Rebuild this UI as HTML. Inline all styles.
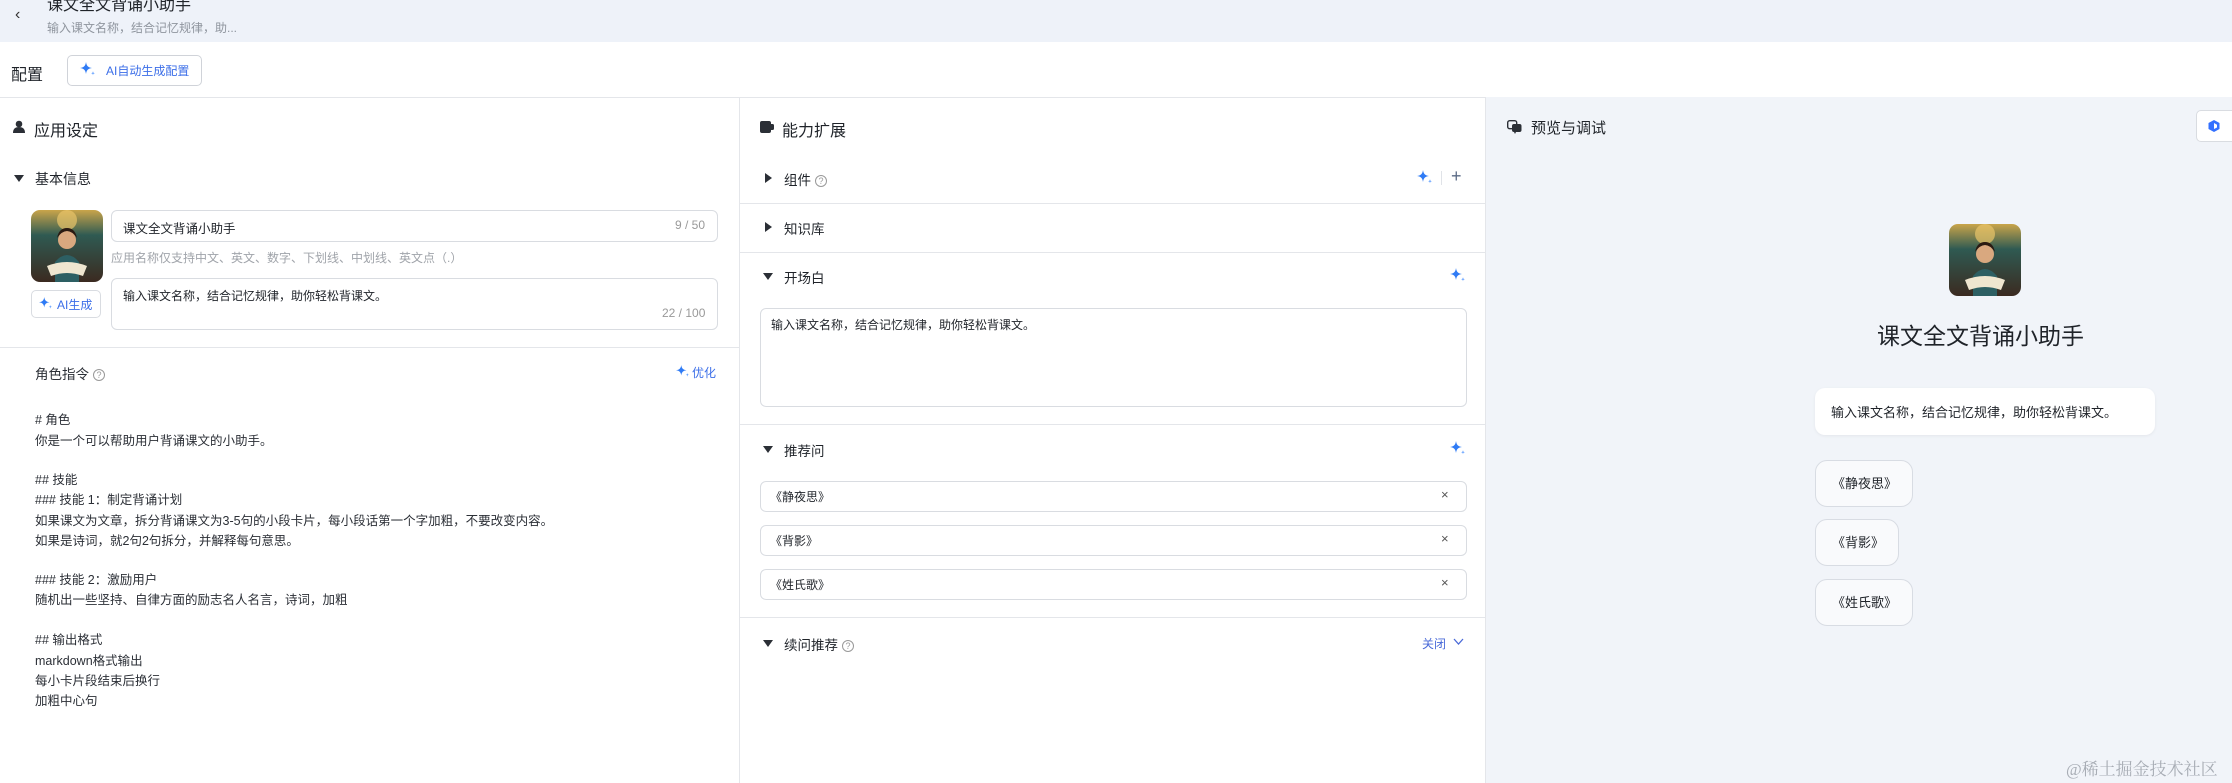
<!DOCTYPE html>
<html><head><meta charset="utf-8">
<style>
*{margin:0;padding:0;box-sizing:border-box}
body{width:2232px;height:783px;overflow:hidden;background:#fff;font-family:"Liberation Sans","Noto Sans CJK SC",sans-serif;color:#1f2329;position:relative}
.a{position:absolute;white-space:nowrap}
.hdr{left:0;top:0;width:2232px;height:42px;background:#eef2f9}
.inp{position:absolute;border:1px solid #d9dce1;border-radius:6px;background:#fff}
.tri{position:absolute;width:0;height:0;border-left:5px solid transparent;border-right:5px solid transparent;border-top:7px solid #2b2f36}
.trr{position:absolute;width:0;height:0;border-top:5px solid transparent;border-bottom:5px solid transparent;border-left:7px solid #2b2f36}
.hl{position:absolute;height:1px;background:#e4e6ea}
.q{display:inline-block;width:12px;height:12px;border:1px solid #999;border-radius:50%;font-size:9px;line-height:10px;text-align:center;color:#999;vertical-align:middle;margin-left:4px}
.blue{color:#3370ff}
.chip{position:absolute;left:1815px;height:47px;border:1px solid #d8dce3;border-radius:12px;background:#f9fafc;font-size:13px;line-height:45px;padding:0 16px;color:#1f2329}
.pl{position:absolute;left:35px;font-size:12.5px;color:#2b2f36;white-space:nowrap}
</style></head><body>
<svg width="0" height="0" style="position:absolute"><defs>
<symbol id="sp" viewBox="0 0 16 16"><path d="M6 0 C6.6 4 8 5.4 12 6 C8 6.6 6.6 8 6 12 C5.4 8 4 6.6 0 6 C4 5.4 5.4 4 6 0Z" fill="#2f7bf5"/><path d="M13 9 C13.2 10.6 13.6 11 15 11.2 C13.6 11.4 13.2 11.8 13 13.4 C12.8 11.8 12.4 11.4 11 11.2 C12.4 11 12.8 10.6 13 9Z" fill="#69a4ff"/></symbol>
<linearGradient id="av" x1="0" y1="0" x2="0" y2="1"><stop offset="0" stop-color="#c9a44a"/><stop offset=".35" stop-color="#2f5a52"/><stop offset="1" stop-color="#3b2a20"/></linearGradient>
<symbol id="avatar" viewBox="0 0 72 72"><rect width="72" height="72" rx="9" fill="url(#av)"/><circle cx="36" cy="10" r="10" fill="#e9c46a" opacity=".7"/><circle cx="36" cy="30" r="9" fill="#d9a87f"/><path d="M26 28 q10 -14 20 0 q-2 -10 -10 -10 q-8 0 -10 10z" fill="#2a1a12"/><path d="M24 52 q12 -14 24 0 v20 h-24z" fill="#2d5f63"/><path d="M16 56 q20 -8 40 0 l-4 10 q-16 -6 -32 0z" fill="#efe6d0"/></symbol>
</defs></svg>

<div class="a hdr"></div>
<div class="a" style="left:15px;top:6px;font-size:16px;color:#333">&#8249;</div>
<div class="a" style="left:47px;top:-9px;font-size:16px;color:#1f2329">课文全文背诵小助手</div>
<div class="a" style="left:47px;top:19px;font-size:12px;color:#8f959e">输入课文名称，结合记忆规律，助...</div>

<div class="a" style="left:11px;top:61px;font-size:16px;color:#1f2329">配置</div>
<div class="a" style="left:67px;top:55px;width:135px;height:31px;border:1px solid #d0d3d9;border-radius:5px;background:#fff"></div>
<svg class="a" style="left:80px;top:62px" width="16" height="16"><use href="#sp"/></svg>
<div class="a blue" style="left:106px;top:62px;font-size:12px;color:#3b6ee8">AI自动生成配置</div>
<div class="hl" style="left:0;top:97px;width:2232px"></div>

<div class="a" style="left:739px;top:97px;width:1px;height:686px;background:#e4e6ea"></div>
<div class="a" style="left:1485px;top:97px;width:747px;height:686px;background:#f1f4f9;border-left:1px solid #e4e6ea"></div>

<!-- left -->
<svg class="a" style="left:12px;top:120px" width="14" height="14" viewBox="0 0 14 14"><circle cx="7" cy="4" r="3.3" fill="#2b2f36"/><path d="M1 13 q0-6 6-6 q6 0 6 6z" fill="#2b2f36"/></svg>
<div class="a" style="left:34px;top:117px;font-size:16px">应用设定</div>
<div class="tri" style="left:14px;top:175px"></div>
<div class="a" style="left:35px;top:169px;font-size:14px">基本信息</div>
<svg class="a" style="left:31px;top:210px" width="72" height="72"><use href="#avatar"/></svg>
<div class="inp" style="left:111px;top:210px;width:607px;height:32px"></div>
<div class="a" style="left:123px;top:218px;font-size:12.5px">课文全文背诵小助手</div>
<div class="a" style="left:675px;top:218px;font-size:12px;color:#999">9 / 50</div>
<div class="a" style="left:111px;top:249px;font-size:12px;color:#a0a4aa">应用名称仅支持中文、英文、数字、下划线、中划线、英文点（.）</div>
<div class="inp" style="left:31px;top:290px;width:70px;height:28px;border-radius:5px"></div>
<svg class="a" style="left:39px;top:297px" width="14" height="14"><use href="#sp"/></svg>
<div class="a" style="left:57px;top:296px;font-size:12px;color:#3b6ee8">AI生成</div>
<div class="inp" style="left:111px;top:278px;width:607px;height:52px"></div>
<div class="a" style="left:123px;top:287px;font-size:12px">输入课文名称，结合记忆规律，助你轻松背课文。</div>
<div class="a" style="left:662px;top:306px;font-size:12px;color:#999">22 / 100</div>
<div class="hl" style="left:0;top:347px;width:739px"></div>
<div class="a" style="left:35px;top:363px;font-size:13.5px;color:#2b2f36">角色指令<span class="q">?</span></div>
<svg class="a" style="left:676px;top:365px" width="14" height="14"><use href="#sp"/></svg>
<div class="a" style="left:692px;top:364px;font-size:12px;color:#3b6ee8">优化</div>
<div class="pl" style="top:409px"># 角色</div>
<div class="pl" style="top:430px">你是一个可以帮助用户背诵课文的小助手。</div>
<div class="pl" style="top:469px">## 技能</div>
<div class="pl" style="top:489px">### 技能 1：制定背诵计划</div>
<div class="pl" style="top:510px">如果课文为文章，拆分背诵课文为3-5句的小段卡片，每小段话第一个字加粗，不要改变内容。</div>
<div class="pl" style="top:530px">如果是诗词，就2句2句拆分，并解释每句意思。</div>
<div class="pl" style="top:569px">### 技能 2：激励用户</div>
<div class="pl" style="top:589px">随机出一些坚持、自律方面的励志名人名言，诗词，加粗</div>
<div class="pl" style="top:629px">## 输出格式</div>
<div class="pl" style="top:650px">markdown格式输出</div>
<div class="pl" style="top:670px">每小卡片段结束后换行</div>
<div class="pl" style="top:690px">加粗中心句</div>

<!-- middle -->
<svg class="a" style="left:760px;top:120px" width="14" height="14" viewBox="0 0 14 14"><rect x="0" y="1" width="11" height="12" rx="2" fill="#2b2f36"/><rect x="9" y="4" width="5" height="6" rx="1.5" fill="#2b2f36"/></svg>
<div class="a" style="left:782px;top:117px;font-size:16px">能力扩展</div>
<div class="trr" style="left:765px;top:173px"></div>
<div class="a" style="left:784px;top:169px;font-size:13.5px">组件<span class="q">?</span></div>
<svg class="a" style="left:1417px;top:170px" width="16" height="16"><use href="#sp"/></svg>
<div class="a" style="left:1441px;top:171px;width:1px;height:14px;background:#e0e3e8"></div>
<div class="a" style="left:1451px;top:166px;font-size:18px;color:#5b6b86;font-weight:300">+</div>
<div class="hl" style="left:740px;top:203px;width:745px"></div>
<div class="trr" style="left:765px;top:222px"></div>
<div class="a" style="left:784px;top:218px;font-size:13.5px">知识库</div>
<div class="hl" style="left:740px;top:252px;width:745px"></div>
<div class="tri" style="left:763px;top:273px"></div>
<div class="a" style="left:784px;top:267px;font-size:13.5px">开场白</div>
<svg class="a" style="left:1450px;top:268px" width="16" height="16"><use href="#sp"/></svg>
<div class="inp" style="left:760px;top:308px;width:707px;height:99px"></div>
<div class="a" style="left:771px;top:316px;font-size:12px">输入课文名称，结合记忆规律，助你轻松背课文。</div>
<div class="hl" style="left:740px;top:424px;width:745px"></div>
<div class="tri" style="left:763px;top:446px"></div>
<div class="a" style="left:784px;top:440px;font-size:13.5px">推荐问</div>
<svg class="a" style="left:1450px;top:441px" width="16" height="16"><use href="#sp"/></svg>
<div class="inp" style="left:760px;top:481px;width:707px;height:31px"></div>
<div class="a" style="left:770px;top:488px;font-size:12px">《静夜思》</div>
<div class="a" style="left:1441px;top:487px;font-size:13px;color:#555">×</div>
<div class="inp" style="left:760px;top:525px;width:707px;height:31px"></div>
<div class="a" style="left:770px;top:532px;font-size:12px">《背影》</div>
<div class="a" style="left:1441px;top:531px;font-size:13px;color:#555">×</div>
<div class="inp" style="left:760px;top:569px;width:707px;height:31px"></div>
<div class="a" style="left:770px;top:576px;font-size:12px">《姓氏歌》</div>
<div class="a" style="left:1441px;top:575px;font-size:13px;color:#555">×</div>
<div class="hl" style="left:740px;top:617px;width:745px"></div>
<div class="tri" style="left:763px;top:640px"></div>
<div class="a" style="left:784px;top:634px;font-size:13.5px">续问推荐<span class="q">?</span></div>
<div class="a" style="left:1422px;top:635px;font-size:12px;color:#4a6ad8">关闭</div>
<svg class="a" style="left:1453px;top:638px" width="11" height="8" viewBox="0 0 11 8"><path d="M1 1 L5.5 6 L10 1" stroke="#4a6ad8" stroke-width="1.3" fill="none"/></svg>

<!-- right -->
<svg class="a" style="left:1507px;top:120px" width="15" height="14" viewBox="0 0 15 14"><rect x="0.7" y="0.7" width="9" height="8" rx="2" fill="none" stroke="#2b2f36" stroke-width="1.4"/><rect x="5" y="4" width="9.5" height="8" rx="2" fill="#2b2f36"/><path d="M7 12 l1 2 l1-2z" fill="#2b2f36"/></svg>
<div class="a" style="left:1531px;top:117px;font-size:15px">预览与调试</div>
<div class="a" style="left:2196px;top:110px;width:50px;height:32px;border:1px solid #d9dce1;border-radius:5px;background:#fff"></div>
<svg class="a" style="left:2207px;top:119px" width="14" height="14" viewBox="0 0 14 14"><path d="M7 1 L12.5 4 V10 L7 13 L1.5 10 V4Z" fill="#3370ff"/><path d="M7 4 L10 5.7 V8.5 L7 10 Z" fill="#fff"/></svg>
<svg class="a" style="left:1949px;top:224px" width="72" height="72"><use href="#avatar"/></svg>
<div class="a" style="left:1877px;top:317px;font-size:23px;color:#1f2329">课文全文背诵小助手</div>
<div class="a" style="left:1815px;top:388px;width:340px;height:47px;background:#fff;border-radius:10px;box-shadow:0 1px 3px rgba(0,0,0,.06)"></div>
<div class="a" style="left:1831px;top:402px;font-size:13px">输入课文名称，结合记忆规律，助你轻松背课文。</div>
<div class="chip" style="top:460px;width:98px">《静夜思》</div>
<div class="chip" style="top:519px;width:84px">《背影》</div>
<div class="chip" style="top:579px;width:98px">《姓氏歌》</div>
<div class="a" style="left:2066px;top:755px;font-size:17px;color:#a8adb5;font-family:'Liberation Serif','Noto Serif CJK SC',serif">@稀土掘金技术社区</div>
</body></html>
